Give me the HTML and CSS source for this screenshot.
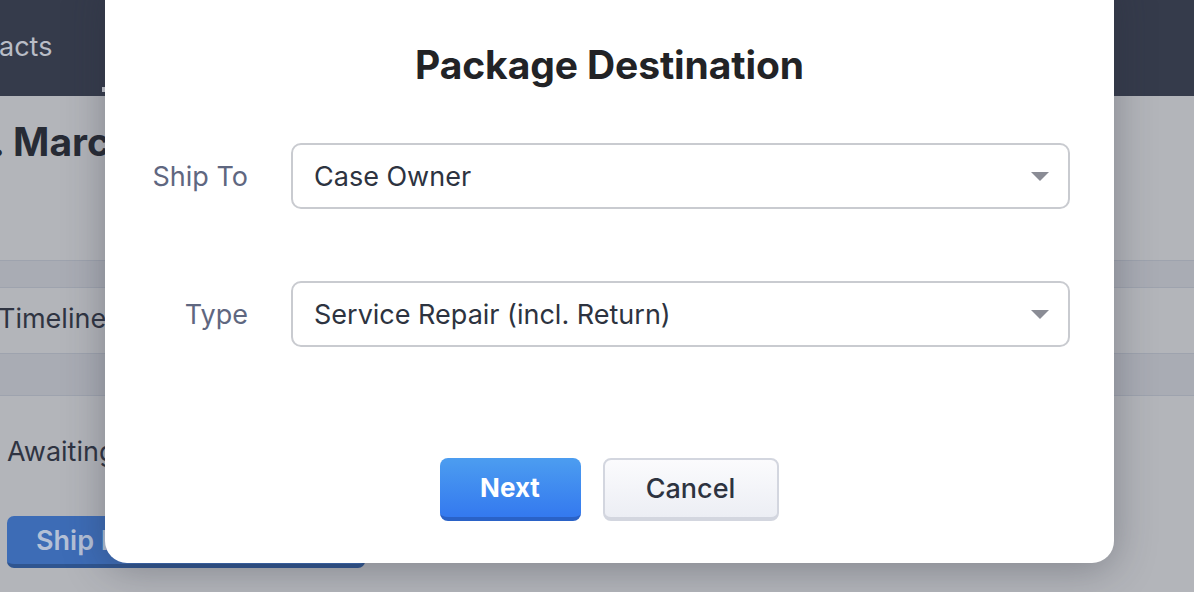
FILE: index.html
```html
<!DOCTYPE html>
<html>
<head>
<meta charset="utf-8">
<link rel="stylesheet" href="styles.css">
</head>
<body>
<div class="page">
  <header class="topbar">
    <div class="nav-item">acts</div>
    <div class="nav-mark"></div>
  </header>
  <section class="title-area">
    <h1 class="record-title">. Marc</h1>
  </section>
  <div class="band"></div>
  <nav class="tabs">
    <div class="tab">Timeline</div>
  </nav>
  <div class="band band-low"></div>
  <section class="status">
    <div class="status-text">Awaiting</div>
    <button class="ship-btn">Ship M</button>
  </section>
</div>

<div class="modal">
  <h2 class="modal-title">Package Destination</h2>
  <div class="form">
    <div class="row">
      <label class="label">Ship To</label>
      <div class="select">
        <span class="select-value">Case Owner</span>
        <span class="caret"></span>
      </div>
    </div>
    <div class="row">
      <label class="label">Type</label>
      <div class="select">
        <span class="select-value">Service Repair (incl. Return)</span>
        <span class="caret"></span>
      </div>
    </div>
  </div>
  <div class="actions">
    <button class="btn btn-primary">Next</button>
    <button class="btn btn-secondary">Cancel</button>
  </div>
</div>
</body>
</html>
```
FILE: styles.css
```css
* { box-sizing: border-box; }
html, body { margin: 0; padding: 0; }
body {
  width: 1194px;
  height: 592px;
  overflow: hidden;
  font-family: Inter, "Noto Sans", sans-serif;
  background: #b3b5ba;
  position: relative;
}
.page {
  display: flex;
  flex-direction: column;
  height: 592px;
}
.topbar {
  height: 96px;
  background: #353b4b;
  display: flex;
  align-items: center;
  position: relative;
}
.nav-item {
  color: #b9bdc6;
  font-size: 27px;
  line-height: 1;
  margin-top: -4px;
  margin-left: -1px;
}
.nav-mark {
  position: absolute;
  left: 102px;
  top: 87px;
  width: 4px;
  height: 5px;
  background: #c9ccd3;
}
.title-area {
  height: 164px;
  padding-top: 24px;
}
.record-title {
  margin: 0 0 0 -8px;
  font-size: 39px;
  font-weight: 700;
  color: #272b35;
  line-height: 44px;
}
.band {
  height: 28px;
  background: #a9acb4;
  border-top: 1px solid #9ea3ae;
  border-bottom: 1px solid #9ea3ae;
}
.tabs {
  height: 65px;
  display: flex;
  align-items: center;
}
.tab {
  color: #2f3442;
  font-size: 27px;
  margin-left: -2px;
  margin-top: -4px;
}
.band-low {
  height: 43px;
}
.status {
  flex: 1;
  padding-left: 7px;
  padding-top: 40px;
}
.status-text {
  color: #2f3442;
  font-size: 27px;
  line-height: 32px;
}
.ship-btn {
  margin-top: 48px;
  width: 358px;
  height: 52px;
  border: none;
  border-bottom: 4px solid #2f5590;
  border-radius: 7px;
  background: #3d6cb6;
  color: #b4c0d6;
  font-family: Inter, sans-serif;
  font-size: 27px;
  font-weight: 600;
  text-align: left;
  padding-left: 29px;
}

.modal {
  position: absolute;
  left: 105px;
  top: -30px;
  width: 1009px;
  height: 593px;
  background: #fff;
  border-radius: 22px;
  box-shadow: 0 6px 40px rgba(40, 44, 56, 0.35);
  padding: 72px 44px 0 0;
  display: flex;
  flex-direction: column;
}
.modal-title {
  margin: 0;
  text-align: center;
  font-size: 39px;
  font-weight: 700;
  color: #222326;
  line-height: 46px;
  letter-spacing: -0.1px;
  padding-left: 44px;
}
.form {
  margin-top: 55px;
  display: flex;
  flex-direction: column;
  gap: 72px;
}
.row {
  display: flex;
  align-items: center;
}
.label {
  width: 143px;
  text-align: right;
  font-size: 27px;
  color: #5f6780;
  margin-right: 43px;
}
.select {
  flex: 1;
  height: 66px;
  border: 2px solid #c9cbd0;
  border-radius: 10px;
  display: flex;
  align-items: center;
  justify-content: space-between;
  padding: 0 19px 0 21px;
}
.select-value {
  font-size: 27px;
  color: #2d3340;
}
.caret {
  width: 0;
  height: 0;
  border-left: 9px solid transparent;
  border-right: 9px solid transparent;
  border-top: 9px solid #8a8c95;
}
.actions {
  margin-top: 111px;
  display: flex;
  justify-content: center;
  gap: 22px;
  padding-left: 44px;
}
.btn {
  height: 63px;
  border-radius: 8px;
  font-family: Inter, sans-serif;
  font-size: 27px;
}
.btn-primary {
  width: 141px;
  border: none;
  border-bottom: 4px solid #2a62c7;
  background: linear-gradient(#4c9df0, #3479ef);
  color: #fff;
  font-size: 26px;
  font-weight: 700;
  margin-left: -1px;
}
.btn-secondary {
  width: 176px;
  border: 2px solid #d3d6df;
  border-bottom-width: 4px;
  background: linear-gradient(#fbfbfd, #eceef4);
  color: #2d3340;
  font-weight: 500;
}
```
